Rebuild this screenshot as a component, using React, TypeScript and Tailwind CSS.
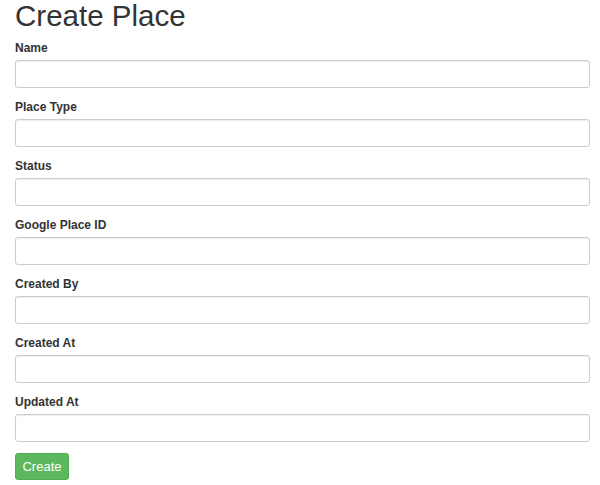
const fields = ['Name', 'Place Type', 'Status', 'Google Place ID', 'Created By', 'Created At', 'Updated At']

export default function App() {
  return (
    <div className="pl-[15px] pr-[10px] font-['Liberation_Sans',Arial,sans-serif] text-[#333] bg-white min-h-[485px]">
      <h1 className="text-[29.5px] leading-[32px] font-normal mb-[7px]">Create Place</h1>
      <form onSubmit={(e) => e.preventDefault()}>
        {fields.map((f) => (
          <div key={f} className="mb-[10px]">
            <label className="block text-[12px] leading-[18px] font-bold mb-[3px]">{f}</label>
            <input
              type="text"
              className="block w-full h-[28px] rounded-[3px] border border-[#ccc] bg-white px-[10px] text-[12px] shadow-[inset_0_1px_1px_rgba(0,0,0,0.075)] outline-none"
            />
          </div>
        ))}
        <button
          type="submit"
          className="mt-[1px] h-[27px] w-[54px] rounded-[3px] border border-[#4cae4c] bg-[#5cb85c] text-white text-[13px] leading-none"
        >
          Create
        </button>
      </form>
    </div>
  )
}
